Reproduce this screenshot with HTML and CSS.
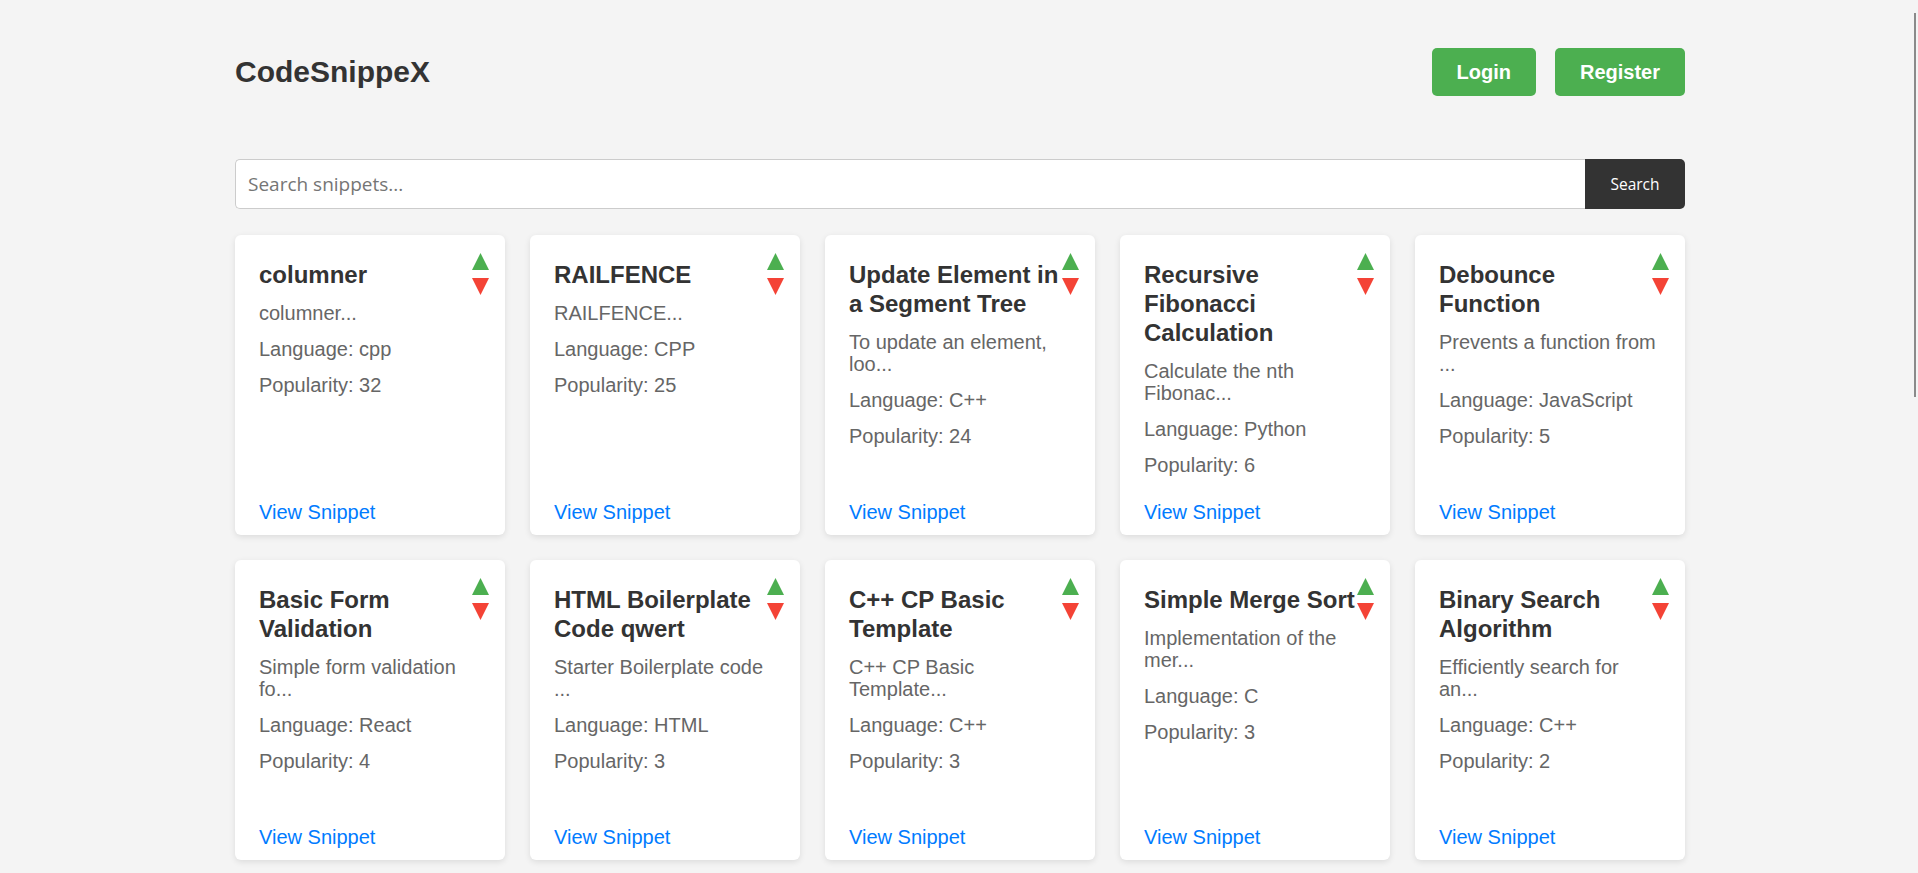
FILE: index.html
```html
<!DOCTYPE html>
<html lang="en">
<head>
<meta charset="UTF-8">
<title>CodeSnippeX</title>
<link rel="stylesheet" href="styles.css">
</head>
<body>
<div class="container">
  <header class="header">
    <h1 class="logo">CodeSnippeX</h1>
    <nav class="auth">
      <a class="btn" href="#">Login</a>
      <a class="btn" href="#">Register</a>
    </nav>
  </header>

  <form class="search" onsubmit="return false">
    <input class="search-input" type="text" placeholder="Search snippets...">
    <button class="search-btn" type="submit">Search</button>
  </form>

  <main class="grid">
    <div class="card">
      <div class="votes">
        <button class="vote"><svg width="17" height="17" viewBox="0 0 17 17"><polygon points="8.5,0 17,17 0,17" fill="#4caf50"/></svg></button>
        <button class="vote"><svg width="17" height="17" viewBox="0 0 17 17"><polygon points="0,0 17,0 8.5,17" fill="#f44336"/></svg></button>
      </div>
      <h3 class="title">columner</h3>
      <p class="text">columner...</p>
      <p class="text">Language: cpp</p>
      <p class="text">Popularity: 32</p>
      <a class="view" href="#">View Snippet</a>
    </div>

    <div class="card">
      <div class="votes">
        <button class="vote"><svg width="17" height="17" viewBox="0 0 17 17"><polygon points="8.5,0 17,17 0,17" fill="#4caf50"/></svg></button>
        <button class="vote"><svg width="17" height="17" viewBox="0 0 17 17"><polygon points="0,0 17,0 8.5,17" fill="#f44336"/></svg></button>
      </div>
      <h3 class="title">RAILFENCE</h3>
      <p class="text">RAILFENCE...</p>
      <p class="text">Language: CPP</p>
      <p class="text">Popularity: 25</p>
      <a class="view" href="#">View Snippet</a>
    </div>

    <div class="card">
      <div class="votes">
        <button class="vote"><svg width="17" height="17" viewBox="0 0 17 17"><polygon points="8.5,0 17,17 0,17" fill="#4caf50"/></svg></button>
        <button class="vote"><svg width="17" height="17" viewBox="0 0 17 17"><polygon points="0,0 17,0 8.5,17" fill="#f44336"/></svg></button>
      </div>
      <h3 class="title">Update Element in a Segment Tree</h3>
      <p class="text">To update an element, loo...</p>
      <p class="text">Language: C++</p>
      <p class="text">Popularity: 24</p>
      <a class="view" href="#">View Snippet</a>
    </div>

    <div class="card">
      <div class="votes">
        <button class="vote"><svg width="17" height="17" viewBox="0 0 17 17"><polygon points="8.5,0 17,17 0,17" fill="#4caf50"/></svg></button>
        <button class="vote"><svg width="17" height="17" viewBox="0 0 17 17"><polygon points="0,0 17,0 8.5,17" fill="#f44336"/></svg></button>
      </div>
      <h3 class="title">Recursive Fibonacci Calculation</h3>
      <p class="text">Calculate the nth Fibonac...</p>
      <p class="text">Language: Python</p>
      <p class="text">Popularity: 6</p>
      <a class="view" href="#">View Snippet</a>
    </div>

    <div class="card">
      <div class="votes">
        <button class="vote"><svg width="17" height="17" viewBox="0 0 17 17"><polygon points="8.5,0 17,17 0,17" fill="#4caf50"/></svg></button>
        <button class="vote"><svg width="17" height="17" viewBox="0 0 17 17"><polygon points="0,0 17,0 8.5,17" fill="#f44336"/></svg></button>
      </div>
      <h3 class="title">Debounce Function</h3>
      <p class="text">Prevents a function from ...</p>
      <p class="text">Language: JavaScript</p>
      <p class="text">Popularity: 5</p>
      <a class="view" href="#">View Snippet</a>
    </div>

    <div class="card">
      <div class="votes">
        <button class="vote"><svg width="17" height="17" viewBox="0 0 17 17"><polygon points="8.5,0 17,17 0,17" fill="#4caf50"/></svg></button>
        <button class="vote"><svg width="17" height="17" viewBox="0 0 17 17"><polygon points="0,0 17,0 8.5,17" fill="#f44336"/></svg></button>
      </div>
      <h3 class="title">Basic Form Validation</h3>
      <p class="text">Simple form validation fo...</p>
      <p class="text">Language: React</p>
      <p class="text">Popularity: 4</p>
      <a class="view" href="#">View Snippet</a>
    </div>

    <div class="card">
      <div class="votes">
        <button class="vote"><svg width="17" height="17" viewBox="0 0 17 17"><polygon points="8.5,0 17,17 0,17" fill="#4caf50"/></svg></button>
        <button class="vote"><svg width="17" height="17" viewBox="0 0 17 17"><polygon points="0,0 17,0 8.5,17" fill="#f44336"/></svg></button>
      </div>
      <h3 class="title">HTML Boilerplate Code qwert</h3>
      <p class="text">Starter Boilerplate code ...</p>
      <p class="text">Language: HTML</p>
      <p class="text">Popularity: 3</p>
      <a class="view" href="#">View Snippet</a>
    </div>

    <div class="card">
      <div class="votes">
        <button class="vote"><svg width="17" height="17" viewBox="0 0 17 17"><polygon points="8.5,0 17,17 0,17" fill="#4caf50"/></svg></button>
        <button class="vote"><svg width="17" height="17" viewBox="0 0 17 17"><polygon points="0,0 17,0 8.5,17" fill="#f44336"/></svg></button>
      </div>
      <h3 class="title">C++ CP Basic Template</h3>
      <p class="text">C++ CP Basic Template...</p>
      <p class="text">Language: C++</p>
      <p class="text">Popularity: 3</p>
      <a class="view" href="#">View Snippet</a>
    </div>

    <div class="card">
      <div class="votes">
        <button class="vote"><svg width="17" height="17" viewBox="0 0 17 17"><polygon points="8.5,0 17,17 0,17" fill="#4caf50"/></svg></button>
        <button class="vote"><svg width="17" height="17" viewBox="0 0 17 17"><polygon points="0,0 17,0 8.5,17" fill="#f44336"/></svg></button>
      </div>
      <h3 class="title">Simple Merge Sort</h3>
      <p class="text">Implementation of the mer...</p>
      <p class="text">Language: C</p>
      <p class="text">Popularity: 3</p>
      <a class="view" href="#">View Snippet</a>
    </div>

    <div class="card">
      <div class="votes">
        <button class="vote"><svg width="17" height="17" viewBox="0 0 17 17"><polygon points="8.5,0 17,17 0,17" fill="#4caf50"/></svg></button>
        <button class="vote"><svg width="17" height="17" viewBox="0 0 17 17"><polygon points="0,0 17,0 8.5,17" fill="#f44336"/></svg></button>
      </div>
      <h3 class="title">Binary Search Algorithm</h3>
      <p class="text">Efficiently search for an...</p>
      <p class="text">Language: C++</p>
      <p class="text">Popularity: 2</p>
      <a class="view" href="#">View Snippet</a>
    </div>
  </main>
</div>
<div class="scroll-thumb"></div>
</body>
</html>
```

FILE: styles.css
```css
* {
  box-sizing: border-box;
}

html, body {
  margin: 0;
  padding: 0;
}

body {
  background: #f4f4f4;
  font-family: "Liberation Sans", Arial, sans-serif;
  color: #333;
}

.container {
  width: 1450px;
  margin-left: calc(50% - 724px);
  padding: 48px 0 40px;
}

.header {
  display: flex;
  justify-content: space-between;
  align-items: center;
  height: 48px;
}

.logo {
  margin: 0;
  font-size: 30px;
  font-weight: bold;
  color: #333;
  line-height: 1;
}

.auth {
  display: flex;
  gap: 19px;
}

.btn {
  display: block;
  background: #4caf50;
  color: #fff;
  text-decoration: none;
  font-size: 20px;
  font-weight: bold;
  line-height: 24px;
  padding: 12px 25px;
  border-radius: 5px;
}

.search {
  display: flex;
  margin: 63px 0 26px;
  height: 50px;
}

.search-input {
  flex: 1;
  height: 50px;
  border: 1px solid #ccc;
  border-right: none;
  border-radius: 5px 0 0 5px;
  padding: 0 12px;
  font-family: "Open Sans", "Liberation Sans", sans-serif;
  font-size: 19px;
  color: #333;
  background: #fff;
  outline: none;
}

.search-input::placeholder {
  color: #757575;
}

.search-btn {
  width: 100px;
  height: 50px;
  border: none;
  background: #333;
  color: #fff;
  font-family: "Open Sans", "Liberation Sans", sans-serif;
  font-size: 15.5px;
  border-radius: 0 5px 5px 0;
  padding: 0;
  cursor: pointer;
}

.grid {
  display: grid;
  grid-template-columns: repeat(5, 270px);
  gap: 25px;
}

.card {
  position: relative;
  display: flex;
  flex-direction: column;
  height: 300px;
  background: #fff;
  border-radius: 6px;
  box-shadow: 0 2px 6px rgba(0, 0, 0, 0.1);
  padding: 25px 23px 12px 24px;
}

.votes {
  position: absolute;
  top: 18px;
  right: 16px;
  display: flex;
  flex-direction: column;
  gap: 8px;
}

.vote {
  display: block;
  width: 17px;
  height: 17px;
  padding: 0;
  border: none;
  background: none;
  cursor: pointer;
}

.vote svg {
  display: block;
}

.title {
  margin: 0 0 13px;
  font-size: 24px;
  line-height: 29px;
  font-weight: bold;
  color: #333;
}

.text {
  margin: 0 0 14px;
  font-size: 20px;
  line-height: 22px;
  color: #666;
}

.view {
  margin-top: auto;
  font-size: 20px;
  line-height: 22px;
  color: #007bff;
  text-decoration: none;
}

.scroll-thumb {
  position: fixed;
  top: 13px;
  right: 2px;
  width: 2px;
  height: 384px;
  background: #8a8a8a;
}
```
